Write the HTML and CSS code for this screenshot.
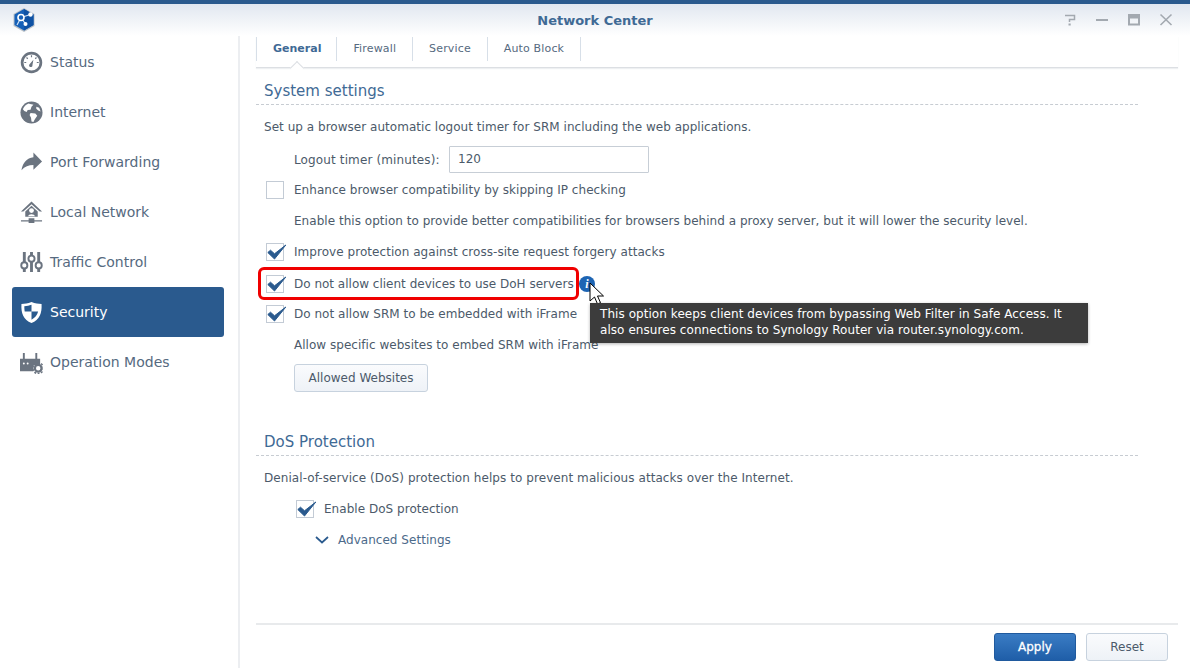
FILE: index.html
```html
<!DOCTYPE html>
<html lang="en">
<head>
<meta charset="utf-8">
<title>Network Center</title>
<link rel="stylesheet" href="styles.css">
</head>
<body>
<div class="window">
  <header class="titlebar">
    <svg class="app-logo" viewBox="0 0 24 24" width="24" height="24">
      <path d="M12 0 22.500 6v12L12 24 1.500 18V6z" fill="#b9bfc6"/>
      <path d="M12 1 21.500 6.500v10.500L12 22.500 2.500 17V6.500z" fill="#1560b8"/>
      <path d="M12 1 21.500 6.500v10.500L12 22.500z" fill="#0f52a4"/>
      <path d="M9 9.500 18.500 6.500M9 9.500l4.500 6.500M5 17l4-7.500" stroke="#cfe2f7" stroke-width="1.200" fill="none"/>
      <circle cx="9" cy="9.500" r="3" fill="#1560b8" stroke="#fff" stroke-width="1.600"/>
      <circle cx="18.500" cy="6.500" r="2.200" fill="#fff"/>
      <circle cx="13.500" cy="16" r="2" fill="#fff"/>
    </svg>
    <h1 class="app-title">Network Center</h1>
    <div class="win-controls">
      <svg viewBox="0 0 14 14" width="14" height="14"><path d="M2 2.500h9.500v4H6.500v2.500" fill="none" stroke="#a3a9b0" stroke-width="1.500"/><path d="M5.500 10.500h2.200v2H5.500z" fill="#a3a9b0"/></svg>
      <svg viewBox="0 0 14 14" width="14" height="14"><path d="M1 6h12v2H1z" fill="#a3a9b0"/></svg>
      <svg viewBox="0 0 14 14" width="14" height="14"><path d="M1 1h12v11.500H1zM3 5.500v5h8v-5z" fill="#a3a9b0" fill-rule="evenodd"/></svg>
      <svg viewBox="0 0 14 14" width="14" height="14"><path d="M1.500 1.500l11 10.500M12.500 1.500l-11 10.500" fill="none" stroke="#a3a9b0" stroke-width="1.600"/></svg>
    </div>
  </header>
  <div class="body">
    <nav class="sidebar">
      <a class="nav-item">
        <svg class="nav-icon" viewBox="0 0 24 24"><circle cx="12" cy="12" r="9.800" fill="none" stroke="#6b7480" stroke-width="2.800"/><path d="M12 4.500v2M19.500 12h-2M4.500 12h2M6.800 6.800l1.300 1.300M17.200 6.800l-1.300 1.300" stroke="#6b7480" stroke-width="1.200"/><path d="M14 9l-1 5.500a1.800 1.800 0 1 1-2.800-1z" fill="#6b7480"/></svg>
        <span>Status</span>
      </a>
      <a class="nav-item">
        <svg class="nav-icon" viewBox="0 0 24 24"><circle cx="12" cy="12" r="11.500" fill="#6b7480"/><path d="M9 2.500c2 1 4 .5 5 1.500l-2 2-1 3-3 .5-1 2-2.500-1-1.500-2C4 6 6 3.500 9 2.500zM11 12.500l5 .5 2 2.500-2.500 3.500-1.500 3-2-.5-.5-4-1.500-3zM17 6l3 1 1.500 4-2.500-1-2-2z" fill="#fff"/></svg>
        <span>Internet</span>
      </a>
      <a class="nav-item">
        <svg class="nav-icon" viewBox="0 0 24 24"><path d="M14 1.500 23 11l-9 8.500v-5c-5 0-9 1.500-12.500 5.500C3 12 7 7.500 14 6.500z" fill="#6b7480"/></svg>
        <span>Port Forwarding</span>
      </a>
      <a class="nav-item">
        <svg class="nav-icon" viewBox="0 0 24 24"><path d="M12 .5 23 11h-2.500L12 3.500 3.500 11H1z" fill="#6b7480"/><path d="M12 5l6.500 6v5.500h-13V11z" fill="#6b7480"/><circle cx="12" cy="10" r="2.500" fill="#fff"/><path d="M8.500 16c0-3 7-3 7 0z" fill="#fff"/><path d="M1 20h8v-2h6v2h8v1.300h-8v1.700H9v-1.700H1z" fill="#6b7480"/></svg>
        <span>Local Network</span>
      </a>
      <a class="nav-item">
        <svg class="nav-icon" viewBox="0 0 24 24"><path d="M3 1h3v21H3zM10.500 1h3v21h-3zM18 1h3v21h-3z" fill="#6b7480"/><circle cx="4.500" cy="15" r="3.200" fill="#fff" stroke="#6b7480" stroke-width="2"/><circle cx="12" cy="8" r="3.200" fill="#fff" stroke="#6b7480" stroke-width="2"/><circle cx="19.500" cy="15" r="3.200" fill="#fff" stroke="#6b7480" stroke-width="2"/></svg>
        <span>Traffic Control</span>
      </a>
      <a class="nav-item active">
        <svg class="nav-icon" viewBox="0 0 24 24"><path d="M12 1c4 1.500 7 2 10.500 2 .5 10-2 16-10.500 20C3.500 19 1 13 1.500 3 5 3 8 2.500 12 1z" fill="#fff"/><path d="M12 4c-2.500 1-4.500 1.400-7.500 1.600 0 2 .1 3.800.4 5.400H12zM12 11v8.500c3.800-2 6-4.600 6.900-8.500z" fill="#2a5a8e"/></svg>
        <span>Security</span>
      </a>
      <a class="nav-item">
        <svg class="nav-icon" viewBox="0 0 24 24"><path d="M3 2h2v6h11V2h2v6h3v7h-7v6H0V8h3z" fill="#6b7480"/><circle cx="4" cy="13" r="1" fill="#fff"/><circle cx="8" cy="13" r="1" fill="#fff"/><circle cx="19" cy="18" r="3.500" fill="#fff" stroke="#6b7480" stroke-width="2.400"/><circle cx="19" cy="18" r="5.600" fill="none" stroke="#6b7480" stroke-width="1.600" stroke-dasharray="2 1.600"/></svg>
        <span>Operation Modes</span>
      </a>
    </nav>
    <main class="content">
      <div class="tabs">
        <span class="tab current">General</span>
        <span class="tab">Firewall</span>
        <span class="tab">Service</span>
        <span class="tab">Auto Block</span>
      </div>
      <div class="pane">
        <section class="system">
          <h2 class="section-title">System settings</h2>
          <p class="line intro">Set up a browser automatic logout timer for SRM including the web applications.</p>
          <div class="field">
            <label class="field-label">Logout timer (minutes):</label>
            <div class="input">120</div>
          </div>
          <div class="check r-enhance"><span class="box"></span>Enhance browser compatibility by skipping IP checking</div>
          <p class="line sub r-proxy">Enable this option to provide better compatibilities for browsers behind a proxy server, but it will lower the security level.</p>
          <div class="check r-csrf"><span class="box"><svg class="tick" viewBox="0 0 20 18"><path d="M.8 8.500 7.500 15 18.800 1 7.500 9.800 3.500 6.200z" fill="#2a5a8e" stroke="#2a5a8e"/></svg></span>Improve protection against cross-site request forgery attacks</div>
          <div class="check r-doh"><span class="box"><svg class="tick" viewBox="0 0 20 18"><path d="M.8 8.500 7.500 15 18.800 1 7.500 9.800 3.500 6.200z" fill="#2a5a8e" stroke="#2a5a8e"/></svg></span>Do not allow client devices to use DoH servers
            <span class="info">i</span>
            <span class="highlight"></span>
            <svg class="cursor" viewBox="0 0 16 24" width="16" height="24"><path d="M1 1v18l4.500-4 3 7 3-1.300-3-6.700h6z" fill="#fff" stroke="#000" stroke-width="1"/></svg>
            <div class="tooltip">This option keeps client devices from bypassing Web Filter in Safe Access. It also ensures connections to Synology Router via router.synology.com.</div>
          </div>
          <div class="check r-iframe"><span class="box"><svg class="tick" viewBox="0 0 20 18"><path d="M.8 8.500 7.500 15 18.800 1 7.500 9.800 3.500 6.200z" fill="#2a5a8e" stroke="#2a5a8e"/></svg></span>Do not allow SRM to be embedded with iFrame</div>
          <p class="line sub r-allow">Allow specific websites to embed SRM with iFrame</p>
          <button class="btn allowed">Allowed Websites</button>
        </section>
        <section class="dos">
          <h2 class="section-title">DoS Protection</h2>
          <p class="line intro denial">Denial-of-service (DoS) protection helps to prevent malicious attacks over the Internet.</p>
          <div class="check indent r-dos"><span class="box"><svg class="tick" viewBox="0 0 20 18"><path d="M.8 8.500 7.500 15 18.800 1 7.500 9.800 3.500 6.200z" fill="#2a5a8e" stroke="#2a5a8e"/></svg></span>Enable DoS protection</div>
          <div class="advanced"><svg viewBox="0 0 14 8" width="14" height="8"><path d="M1 1l6 5.500L13 1" fill="none" stroke="#2a5a8e" stroke-width="1.700"/></svg>Advanced Settings</div>
        </section>
      </div>
      <footer class="footer">
        <button class="btn primary">Apply</button>
        <button class="btn">Reset</button>
      </footer>
    </main>
  </div>
</div>
</body>
</html>
```
FILE: styles.css
```css
* { box-sizing: border-box; }
html, body { margin: 0; padding: 0; }
body {
  width: 1190px;
  height: 668px;
  overflow: hidden;
  background: #fff;
  font-family: "DejaVu Sans", sans-serif;
  font-size: 12px;
  color: #4c5a6a;
}
.window { display: flex; flex-direction: column; height: 668px; }

.titlebar {
  height: 36px;
  flex: none;
  border-top: 4px solid #2a5a8e;
  background: linear-gradient(#e1e7f0, #ffffff);
  display: flex;
  align-items: center;
  justify-content: center;
  position: relative;
}
.app-logo { position: absolute; left: 12px; top: 4px; }
.app-title { margin: 0; font-size: 13px; font-weight: 700; color: #3f6a95; }
.win-controls {
  position: absolute;
  right: 17px;
  top: 9px;
  display: flex;
  gap: 18px;
}

.body { flex: 1; display: flex; min-height: 0; }

.sidebar {
  width: 240px;
  flex: none;
  padding: 1px 14px 0 12px;
  border-right: 2px solid #eceef1;
}
.nav-item {
  height: 50px;
  display: flex;
  align-items: center;
  gap: 7px;
  padding-left: 8px;
  border-radius: 3px;
  font-size: 14px;
  color: #566a80;
}
.nav-icon { width: 23px; height: 23px; flex: none; }
.nav-item.active { background: #2a5a8e; color: #fff; }

.content {
  flex: 1;
  display: flex;
  flex-direction: column;
  padding: 0 12px 0 16px;
  min-width: 0;
}
.tabs {
  height: 32px;
  flex: none;
  display: flex;
  align-items: center;
  padding-bottom: 5px;
  border-bottom: 1px solid #dcdfe3;
  box-shadow: 0 1px 1px #eef0f2;
  position: relative;
}
.tab {
  height: 24px;
  line-height: 24px;
  padding: 0 16px;
  border-right: 1px solid #d7dfe8;
  font-size: 11px;
  letter-spacing: .15px;
  color: #566a80;
}
.tab:first-child { border-left: 1px solid #d7dfe8; }
.tab.current { font-weight: 700; color: #3f6a95; position: relative; padding-right: 15px; letter-spacing: 0; }
.tab.current::after {
  content: "";
  position: absolute;
  left: 50%;
  top: 26px;
  width: 9px;
  height: 9px;
  margin-left: -5px;
  background: #fff;
  border-left: 1px solid #dcdfe3;
  border-top: 1px solid #dcdfe3;
  transform: rotate(45deg);
}

.pane { flex: 1; padding: 0 40px 0 0; min-height: 0; letter-spacing: .03px; }
.section-title {
  margin: 0;
  height: 37px;
  padding: 14px 0 0 8px;
  font-size: 15px;
  font-weight: 400;
  line-height: 18px;
  color: #3f6a95;
  border-bottom: 1px dashed #c7ccd2;
  letter-spacing: 0;
}
.line { margin: 0; line-height: 16px; color: #4c5a6a; }
.intro { padding-left: 8px; margin-top: 14px; }
.denial { letter-spacing: .07px; }
.sub { padding-left: 38px; }

.field { display: flex; align-items: center; margin: 11px 0 0 38px; }
.field-label { width: 155px; letter-spacing: .13px; }
.input {
  width: 200px;
  height: 27px;
  line-height: 25px;
  padding-left: 8px;
  border: 1px solid #c7ced6;
  border-radius: 1px;
}

.check { display: flex; align-items: center; height: 18px; padding-left: 10px; position: relative; }
.r-csrf { letter-spacing: .05px; }
.box {
  width: 18px;
  height: 18px;
  margin-right: 10px;
  flex: none;
  border: 1px solid #c3cbd5;
  background: #fff;
  position: relative;
}
.tick { position: absolute; left: 0; top: 0; width: 20px; height: 18px; }
.r-enhance { margin-top: 8px; }
.r-proxy { margin-top: 14px; }
.r-csrf { margin-top: 14px; }
.r-doh { margin-top: 14px; letter-spacing: 0; }
.r-iframe { margin-top: 12px; }
.r-allow { margin-top: 14px; }

.info {
  position: absolute;
  left: 323px;
  top: 1px;
  width: 16px;
  height: 16px;
  border-radius: 50%;
  background: #1d64b3;
  color: #fff;
  font: italic 700 12px/16px "Liberation Serif", serif;
  text-align: center;
}
.highlight {
  position: absolute;
  left: 2px;
  top: -8px;
  width: 321px;
  height: 33px;
  border: 3px solid #f00000;
  border-radius: 6px;
}
.cursor { position: absolute; left: 333px; top: 7px; }
.tooltip {
  position: absolute;
  left: 334px;
  top: 28px;
  width: 498px;
  height: 40px;
  padding: 3px 10px;
  background: #3c3c3c;
  color: #fff;
  font-size: 12px;
  line-height: 16px;
  letter-spacing: .06px;
  box-shadow: 0 1px 3px rgba(0,0,0,.3);
  z-index: 2;
}

.btn {
  height: 28px;
  border: 1px solid #c7d2de;
  border-radius: 3px;
  background: linear-gradient(#fafbfd, #eef2f7);
  font: 12px "DejaVu Sans", sans-serif;
  color: #4c5a6a;
}
.allowed { width: 134px; margin: 11px 0 0 38px; display: block; }

.dos { margin-top: 26px; }
.dos .section-title { padding-top: 15px; height: 38px; }
.indent { padding-left: 40px; }
.r-dos { margin-top: 14px; }
.advanced {
  display: flex;
  align-items: center;
  gap: 9px;
  margin: 14px 0 0 59px;
  height: 16px;
  color: #4c6a8a;
}

.footer {
  height: 45px;
  flex: none;
  display: flex;
  justify-content: flex-end;
  align-items: flex-start;
  gap: 10px;
  padding: 8px 10px 0 0;
  border-top: 2px solid #e8eaec;
}
.footer .btn { width: 82px; }
.primary {
  background: linear-gradient(#3a7cc4, #1f5ea8);
  border-color: #205a9e;
  color: #fff;
  -webkit-text-stroke: .3px #fff;
}
```
